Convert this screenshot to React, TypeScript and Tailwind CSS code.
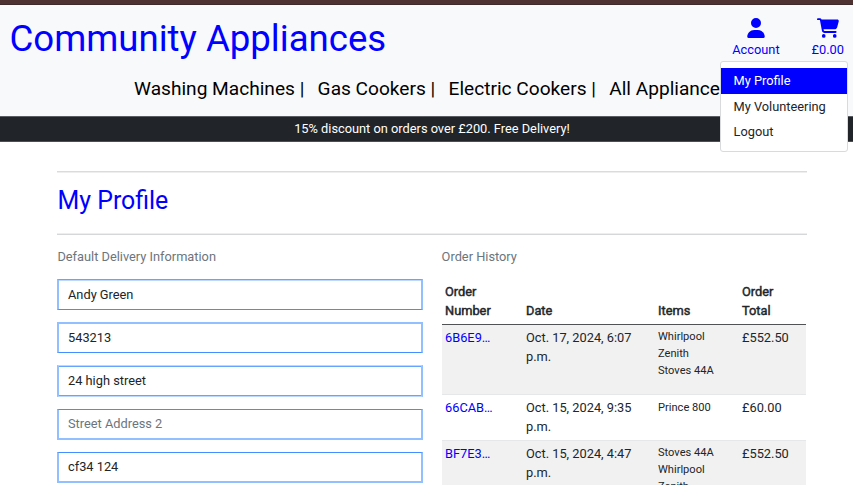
import React from "react";
import { FaCartShopping, FaUser } from "react-icons/fa6";

const categories = ["Washing Machines |", "Gas Cookers |", "Electric Cookers |", "All Appliances"];

const fields = [
  { value: "Andy Green", edge: "h-[31px] border-t-[#66a5ff] border-b-[#448fff] shadow-[inset_0_1px_0_#bcd8ff]" },
  { value: "543213", edge: "h-[31px] border-t-2 border-t-[#92bfff] border-b-[#448fff] pb-[2px]" },
  { value: "24 high street", edge: "h-[32px] border-t-[#bcd8ff] border-b-[#bcd8ff] pb-[2px] shadow-[inset_0_1px_0_#66a5ff,inset_0_-1px_0_#66a5ff]" },
  { value: "", placeholder: "Street Address 2", edge: "h-[31px] border-t-[#448fff] border-b-2 border-b-[#92bfff] pb-[1px]" },
  { value: "cf34 124", edge: "h-[31px] border-t-[#448fff] border-b-[#92bfff] pb-[2px] shadow-[inset_0_-1px_0_#92bfff]" },
];

const orders = [
  { id: "6B6E9…", date: "Oct. 17, 2024, 6:07 p.m.", items: ["Whirlpool", "Zenith", "Stoves 44A"], total: "£552.50" },
  { id: "66CAB…", date: "Oct. 15, 2024, 9:35 p.m.", items: ["Prince 800"], total: "£60.00" },
  { id: "BF7E3…", date: "Oct. 15, 2024, 4:47 p.m.", items: ["Stoves 44A", "Whirlpool", "Zenith"], total: "£552.50" },
];

const rowHeights = ["h-[70px]", "h-[46px]", "h-[70px]"];
const itemPadding = ["pt-[3px]", "pt-[4px]", "pt-[3px]"];
const headings = ["Order Number", "Date", "Items", "Order Total"];

function AccountMenu() {
  return (
    <div className="absolute left-[720px] top-[61px] z-10 h-[91px] w-[128px] rounded-[3px] border border-[#d9dadb] bg-white pt-[6px]">
      <div className="h-[26px] bg-[#0000ff] pl-[12.5px] leading-[26px] text-white">My Profile</div>
      <div className="h-[25px] pl-[12.5px] leading-[26px]">My Volunteering</div>
      <div className="h-[25px] pl-[12.5px] leading-[26px]">Logout</div>
    </div>
  );
}

export default function App() {
  return (
    <div className="relative h-[485px] w-[853px] overflow-hidden bg-white font-['Roboto',sans-serif] text-[12.8px] leading-[19px] text-[#212529]">
      <div className="h-[5px] border-b border-[#3f2a2b] bg-[#4e3232]" />
      <header className="h-[111px] bg-[#f8f9fb]">
        <div className="flex h-[64px] justify-between">
          <h1 className="ml-[9.5px] mt-[11px] whitespace-nowrap text-[36.6px] leading-[46px] text-[#0000ff]">Community Appliances</h1>
          <div className="mr-[9px] flex gap-[32px] pt-[13px] text-[#0000ff]">
            <div className="flex flex-col items-center">
              <FaUser className="h-[20px] w-[18px]" />
              <span className="mt-[2px]">Account</span>
            </div>
            <div className="flex flex-col items-center">
              <FaCartShopping className="h-[20px] w-[22px]" />
              <span className="mt-[2px]">£0.00</span>
            </div>
          </div>
        </div>
        <nav className="flex gap-[13.3px] whitespace-nowrap pl-[134px] pt-[8px] text-[19.13px] leading-[24px] text-black">
          {categories.map((c) => <span key={c}>{c}</span>)}
        </nav>
      </header>
      <div className="h-[26px] border-y border-t-[#5a5e62] border-b-[#4b4e52] bg-[#212529] pl-[11px] text-center leading-[24px] text-white">
        15% discount on orders over £200. Free Delivery!
      </div>
      <AccountMenu />
      <main className="ml-[57px] w-[750px] pt-[29px]">
        <div className="h-[64px] border-y border-t-[#dadbdc] border-b-[#d6d7d8] shadow-[inset_0_1px_0_#eeeeef,inset_0_-1px_0_#eeeeef]">
          <h2 className="pl-[0.5px] pt-[14px] text-[24.9px] leading-[30px] text-[#0000ff]">My Profile</h2>
        </div>
        <div className="flex pt-[12px]">
          <section className="w-[366px]">
            <p className="pl-[0.4px] text-[#6c757d]">Default Delivery Information</p>
            <form className="mt-[13px] flex flex-col gap-[12px]">
              {fields.map((f, i) => (
                <input
                  key={i}
                  defaultValue={f.value}
                  placeholder={f.placeholder}
                  className={`${f.edge} w-full border-y border-x-2 border-x-[#92bfff] bg-white px-[9px] outline-none placeholder:text-[#6c757d]`}
                />
              ))}
            </form>
          </section>
          <section className="ml-[19px] w-[364px]">
            <p className="-ml-[0.4px] text-[#6c757d]">Order History</p>
            <table className="mt-[12px] w-[364px] table-fixed border-collapse text-left">
              <colgroup>
                <col className="w-[81px]" />
                <col className="w-[132px]" />
                <col className="w-[84px]" />
                <col className="w-[67px]" />
              </colgroup>
              <thead>
                <tr className="h-[46px] border-b border-[#505254] align-bottom">
                  {headings.map((h) => (
                    <th key={h} className="px-[3px] pb-[4px] font-normal [-webkit-text-stroke:0.45px_#212529]">{h}</th>
                  ))}
                </tr>
              </thead>
              <tbody>
                {orders.map((o, i) => (
                  <tr key={o.id} className={`${rowHeights[i]} border-b border-[#e6e7e8] align-top odd:bg-[#f1f1f1]`}>
                    <td className="px-[3px] pt-[3px] text-[#0000ff]">{o.id}</td>
                    <td className="px-[3px] pt-[3px]">{o.date}</td>
                    <td className={`px-[3px] ${itemPadding[i]} text-[11.1px] leading-[17px]`}>
                      {o.items.map((item) => <div key={item}>{item}</div>)}
                    </td>
                    <td className="px-[3px] pt-[3px]">{o.total}</td>
                  </tr>
                ))}
              </tbody>
            </table>
          </section>
        </div>
      </main>
    </div>
  );
}
